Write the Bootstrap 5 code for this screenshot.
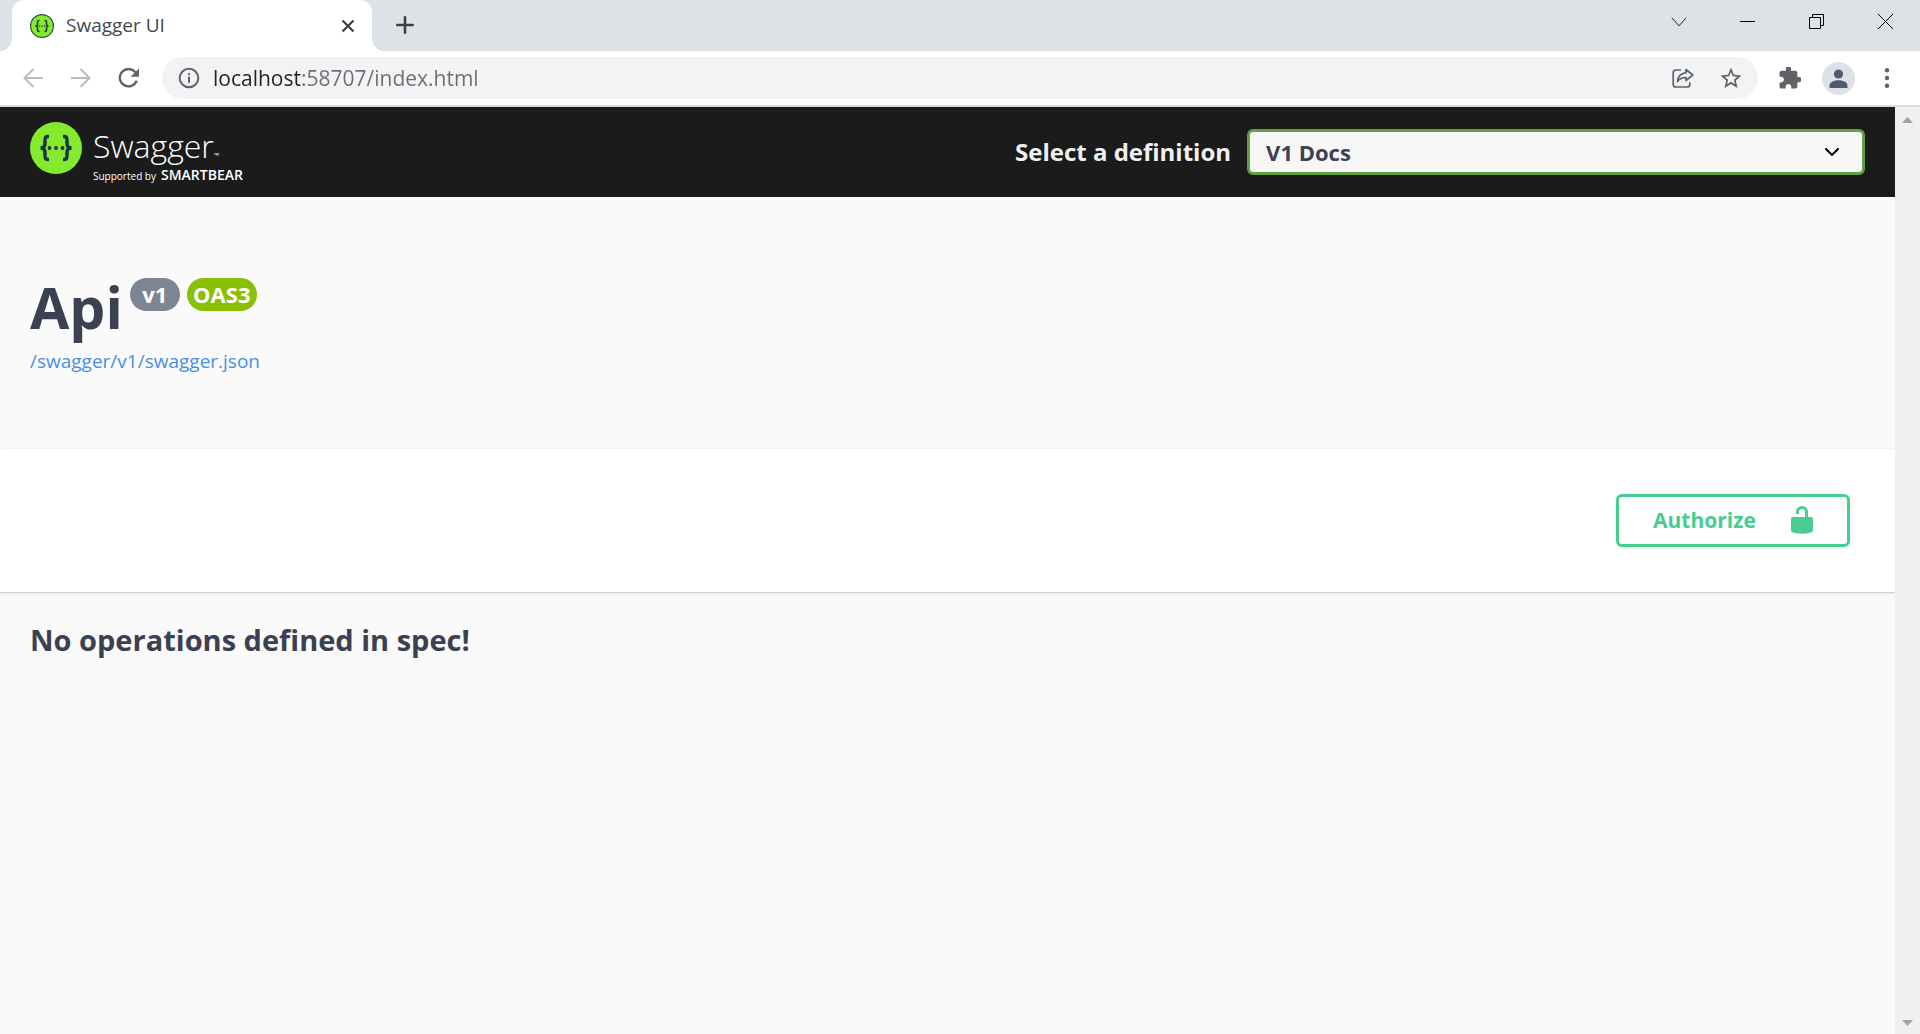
<!DOCTYPE html>
<html lang="en">
<head>
<meta charset="utf-8">
<meta name="viewport" content="width=device-width, initial-scale=1">
<title>Swagger UI</title>
<link href="https://cdn.jsdelivr.net/npm/bootstrap@5.3.0/dist/css/bootstrap.min.css" rel="stylesheet">
<style>
  body { font-family: "Open Sans", "Noto Sans", sans-serif; color: #3b4151; background: #fafafa; }
  svg { display: block; flex: none; }
  .plain-btn { border: 0; padding: 0; background: transparent; display: flex; align-items: center; justify-content: center; flex: none; }

  /* browser window */
  .tab-strip { background: #dee1e6; height: 51px; padding-left: 12px; }
  .browser-tab { position: relative; width: 360px; height: 51px; background: #fff; border-radius: 12px 12px 0 0; padding: 0 16px 0 18px; font-size: 19px; color: #45494e; }
  .browser-tab::before, .browser-tab::after { content: ""; position: absolute; bottom: 0; width: 12px; height: 12px; }
  .browser-tab::before { left: -12px; background: radial-gradient(circle at 0 0, transparent 12px, #fff 12px); }
  .browser-tab::after { right: -12px; background: radial-gradient(circle at 100% 0, transparent 12px, #fff 12px); }
  .tab-title { margin-left: 12px; }
  .win-btn { width: 69px; height: 43px; }
  .tool-row { background: #fff; height: 56px; border-bottom: 2px solid #d9dadc; padding: 0 9px; }
  .nav-btn { width: 48px; height: 42px; }
  .tool-extra { gap: 21px; margin-left: 21px; }
  .omnibox { background: #f1f3f4; height: 42px; border-radius: 21px; padding: 0 3px 0 15px; margin-left: 9px; }
  .address { flex: 1; min-width: 0; border: 0; outline: 0; padding: 0; margin-left: 12px; font-size: 21px; line-height: 30px; color: #5f6368;
    background: linear-gradient(90deg, #202124 88px, #6b6e72 88px); -webkit-background-clip: text; background-clip: text; -webkit-text-fill-color: transparent; }

  /* swagger page */
  .topbar { background: #1b1b1b; height: 90px; padding: 0 30px; }
  .brand { color: #fff; text-decoration: none; gap: 11px; height: 60px; }
  .brand-text { padding-top: 4px; }
  .brand-name { font-size: 32px; line-height: 40px; font-weight: 350; }
  .brand-tm { font-size: 7px; line-height: 10px; }
  .brand-sub { font-size: 10px; line-height: 18px; gap: 5px; }
  .brand-sub strong { font-size: 14px; font-weight: 600; }
  .definition { width: 850px; gap: 16px; }
  .definition label { font-size: 24px; font-weight: 700; color: #f0f0f0; white-space: nowrap; }
  .definition select { flex: 1; min-width: 0; height: 46px; border: 3px solid #62a03f; border-radius: 6px; padding: 0 60px 0 16px; font-size: 22px; font-weight: 700; color: #3b4151; -webkit-appearance: none; appearance: none;
    background: #f7f7f7 url("data:image/svg+xml,%3Csvg xmlns='http://www.w3.org/2000/svg' viewBox='0 0 14 8'%3E%3Cpath d='M1 1l6 6 6-6' fill='none' stroke='%23000' stroke-width='2' stroke-linecap='round'/%3E%3C/svg%3E") no-repeat right 23px center / 14px 8px; }
  .info { height: 252px; padding: 74px 30px 0; }
  .info h1 { font-size: 57px; line-height: 72px; font-weight: 700; margin: 0; }
  .pill { height: 33px; line-height: 33px; border-radius: 17px; color: #fff; font-size: 22px; font-weight: 700; text-align: center; margin-top: 7px; }
  .pill-version { background: #7d8492; width: 50px; margin-left: 7px; }
  .pill-oas { background: #89bf04; width: 70px; margin-left: 7px; }
  .spec-link { display: inline-block; margin-top: 5px; font-size: 19px; line-height: 27px; color: #4990e2; text-decoration: none; }
  .schemes { background: #fff; height: 143px; padding: 0 45px; box-shadow: 0 1px 3px rgba(0,0,0,.15), 0 1px 0 rgba(0,0,0,.08); }
  .authorize { width: 234px; height: 53px; border: 3px solid #49cc90; border-radius: 6px; background: transparent; color: #49cc90; font-size: 21px; font-weight: 700; padding: 0 34px; box-shadow: 0 1px 3px rgba(0,0,0,.1); }
  .operations { padding: 29px 30px; }
  .operations h2 { font-size: 29px; line-height: 38px; font-weight: 700; margin: 0; }
  .scroll-rail { position: relative; width: 25px; background: #f0f0f0; padding: 10px 0 8px; }
</style>
<script src="https://cdn.jsdelivr.net/npm/bootstrap@5.3.0/dist/js/bootstrap.bundle.min.js"></script>
</head>
<body class="d-flex flex-column vh-100">

<header>
  <div class="tab-strip d-flex align-items-start">
    <div class="browser-tab d-flex align-items-center">
      <svg width="24" height="24" viewBox="0 0 24 24"><circle cx="12" cy="12" r="11.4" fill="#85ea2d" stroke="#24513e" stroke-width="1.2"/><g fill="none" stroke="#173647" stroke-width="1.5"><path d="M9.5 6.5H9Q7.500 6.500 7.500 8v2q0 2-2 2 2 0 2 2v2q0 1.500 1.500 1.500h.5M14.500 6.500h.5q1.500 0 1.500 1.500v2q0 2 2 2-2 0-2 2v2q0 1.500-1.500 1.500h-.5"/></g><g fill="#173647"><circle cx="9.500" cy="12" r=".8"/><circle cx="12" cy="12" r=".8"/><circle cx="14.500" cy="12" r=".8"/></g></svg>
      <span class="tab-title flex-grow-1">Swagger UI</span>
      <button class="plain-btn" type="button" aria-label="Close tab"><svg width="16" height="16" viewBox="0 0 16 16" stroke="#3c4043" stroke-width="2.200"><path d="M2.500 2.500l11 11M13.500 2.500l-11 11"/></svg></button>
    </div>
    <button class="plain-btn ms-4 mt-3" type="button" aria-label="New tab"><svg width="18" height="18" viewBox="0 0 18 18" stroke="#3c4043" stroke-width="2.600" stroke-linecap="round"><path d="M9 1.300v15.400M1.300 9h15.400"/></svg></button>
    <div class="d-flex ms-auto">
      <button class="plain-btn win-btn" type="button" aria-label="Search tabs"><svg width="16" height="10" viewBox="0 0 16 10" fill="none" stroke="#222" stroke-width="1"><path d="M.8.8L8 8.800 15.200.8"/></svg></button>
      <button class="plain-btn win-btn" type="button" aria-label="Minimize"><svg width="15" height="15" viewBox="0 0 15 15"><path d="M0 7h15v1H0z"/></svg></button>
      <button class="plain-btn win-btn" type="button" aria-label="Restore"><svg width="15" height="15" viewBox="0 0 15 15" fill="none" stroke="#000"><path d="M.5 3.500h11v11H.5zM3.500 3.500v-3h11v11h-3"/></svg></button>
      <button class="plain-btn win-btn" type="button" aria-label="Close window"><svg width="15" height="15" viewBox="0 0 15 15" stroke="#000" stroke-width="1"><path d="M0 0l15 15M15 0L0 15"/></svg></button>
    </div>
  </div>

  <div class="tool-row d-flex align-items-center">
    <button class="plain-btn nav-btn" type="button" aria-label="Back"><svg width="20" height="20" viewBox="0 0 20 20" fill="none" stroke="#babcbe" stroke-width="2"><path d="M20 10H2M10.500 1L1.500 10l9 9"/></svg></button>
    <button class="plain-btn nav-btn" type="button" aria-label="Forward"><svg width="20" height="20" viewBox="0 0 20 20" fill="none" stroke="#babcbe" stroke-width="2"><path d="M0 10h18M9.500 1l9 9-9 9"/></svg></button>
    <button class="plain-btn nav-btn" type="button" aria-label="Reload"><svg width="22" height="20" viewBox="0 0 22 20"><path d="M17.300 4.200A8.700 8.700 0 1 0 18.700 12.600" fill="none" stroke="#5f6368" stroke-width="2.400"/><path d="M21 .5v8.300h-8.300z" fill="#5f6368"/></svg></button>
    <div class="omnibox d-flex align-items-center flex-grow-1">
      <svg width="24" height="24" viewBox="0 0 24 24"><circle cx="12" cy="12" r="9.300" fill="none" stroke="#5f6368" stroke-width="2"/><path d="M11 10.800h2v6h-2zM11 7.200h2v2h-2z" fill="#5f6368"/></svg>
      <input class="address" type="text" aria-label="Address" value="localhost:58707/index.html">
      <button class="plain-btn nav-btn" type="button" aria-label="Share"><svg width="22" height="20" viewBox="0 0 22 20" fill="none" stroke="#5f6368" stroke-width="1.700"><path d="M9 2H4Q1.200 2 1.200 4.800v11.400Q1.200 19 4 19h11q2.800 0 2.800-2.800v-2"/><path d="M14 1.500l6.800 5.500-6.800 5.500V9.500q-5-.3-8.500 4Q6 6 14 4.700z" stroke-linejoin="round"/></svg></button>
      <button class="plain-btn nav-btn" type="button" aria-label="Bookmark"><svg width="24" height="24" viewBox="0 0 24 24"><path fill="#5f6368" d="M22.500 9.400l-7.500-.7L12 1.500 9 8.700l-7.500.7 5.700 5L5.500 22 12 18l6.500 4-1.700-7.600zM12 15.800l-3.900 2.400 1-4.500-3.400-3 4.500-.4L12 6l1.800 4.300 4.500.4-3.400 3 1 4.500z"/></svg></button>
    </div>
    <div class="tool-extra d-flex align-items-center">
      <button class="plain-btn" type="button" aria-label="Extensions"><svg width="22" height="22" viewBox="1.500 1.500 21 21"><path fill="#5f6368" d="M20.500 11H19V7c0-1.100-.9-2-2-2h-4V3.500a2.500 2.500 0 0 0-5 0V5H4c-1.100 0-1.990.9-1.990 2v3.800H3.500c1.490 0 2.700 1.210 2.700 2.700s-1.210 2.700-2.700 2.700H2V20c0 1.100.9 2 2 2h3.800v-1.500c0-1.490 1.210-2.700 2.700-2.700s2.700 1.210 2.700 2.700V22H17c1.100 0 2-.9 2-2v-4h1.500a2.500 2.500 0 0 0 0-5z"/></svg></button>
      <button class="plain-btn" type="button" aria-label="Profile"><svg width="33" height="33" viewBox="0 0 33 33"><circle cx="16.500" cy="16.500" r="16.500" fill="#dee1e6"/><g fill="#505b70"><circle cx="16.500" cy="12" r="4.600"/><path d="M7.500 26v-2.500c0-3.500 5-5.200 9-5.200s9 1.700 9 5.200V26z"/></g></svg></button>
    </div>
    <button class="plain-btn nav-btn ms-2" type="button" aria-label="Menu"><svg width="6" height="20" viewBox="0 0 6 20" fill="#5f6368"><circle cx="3" cy="2.200" r="2.200"/><circle cx="3" cy="10" r="2.200"/><circle cx="3" cy="17.800" r="2.200"/></svg></button>
  </div>
</header>

<div class="d-flex flex-grow-1">
  <main class="flex-grow-1">
    <nav class="topbar d-flex align-items-center justify-content-between">
      <a class="brand d-flex align-items-start" href="#">
        <svg width="52" height="52" viewBox="0 0 52 52"><circle cx="26" cy="26" r="26" fill="#85ea2d"/><g fill="none" stroke="#173647" stroke-width="3.400"><path d="M19 14.500h-1.300Q15 14.500 15 18v3.500Q15 26 10.500 26 15 26 15 30.500V34q0 3.500 2.700 3.500H19M33 14.500h1.300Q37 14.500 37 18v3.500Q37 26 41.500 26 37 26 37 30.500V34q0 3.500-2.700 3.500H33"/></g><g fill="#173647"><circle cx="19.500" cy="26" r="1.900"/><circle cx="26" cy="26" r="1.900"/><circle cx="32.500" cy="26" r="1.900"/></g></svg>
        <span class="brand-text d-flex flex-column">
          <span class="d-flex align-items-baseline"><span class="brand-name">Swagger</span><span class="brand-tm">™</span></span>
          <span class="brand-sub d-flex align-items-baseline">Supported by <strong>SMARTBEAR</strong></span>
        </span>
      </a>
      <div class="definition d-flex align-items-center">
        <label for="definition">Select a definition</label>
        <select id="definition"><option>V1 Docs</option></select>
      </div>
    </nav>

    <section class="info">
      <div class="d-flex align-items-start">
        <h1>Api</h1>
        <span class="pill pill-version">v1</span>
        <span class="pill pill-oas">OAS3</span>
      </div>
      <a class="spec-link" href="#">/swagger/v1/swagger.json</a>
    </section>

    <section class="schemes d-flex align-items-center justify-content-end">
      <button class="authorize d-flex align-items-center justify-content-between" type="button">
        <span>Authorize</span>
        <svg width="22" height="30" viewBox="0 0 22 30"><path d="M6.500 8V6a4.500 4.500 0 0 1 9 0V12" fill="none" stroke="#49cc90" stroke-width="3"/><path d="M2 11h18q2 0 2 2V24q0 2-2 2.500-9 2.500-18 0Q0 26 0 24V13q0-2 2-2z" fill="#49cc90"/></svg>
      </button>
    </section>

    <section class="operations">
      <h2>No operations defined in spec!</h2>
    </section>
  </main>

  <div class="scroll-rail d-flex flex-column justify-content-between align-items-center" aria-hidden="true">
    <svg width="11" height="6" viewBox="0 0 11 6"><path d="M0 6L5.500 0 11 6z" fill="#a3a3a3"/></svg>
    <svg width="11" height="6" viewBox="0 0 11 6"><path d="M0 0h11L5.500 6z" fill="#a3a3a3"/></svg>
  </div>
</div>
</body>
</html>
